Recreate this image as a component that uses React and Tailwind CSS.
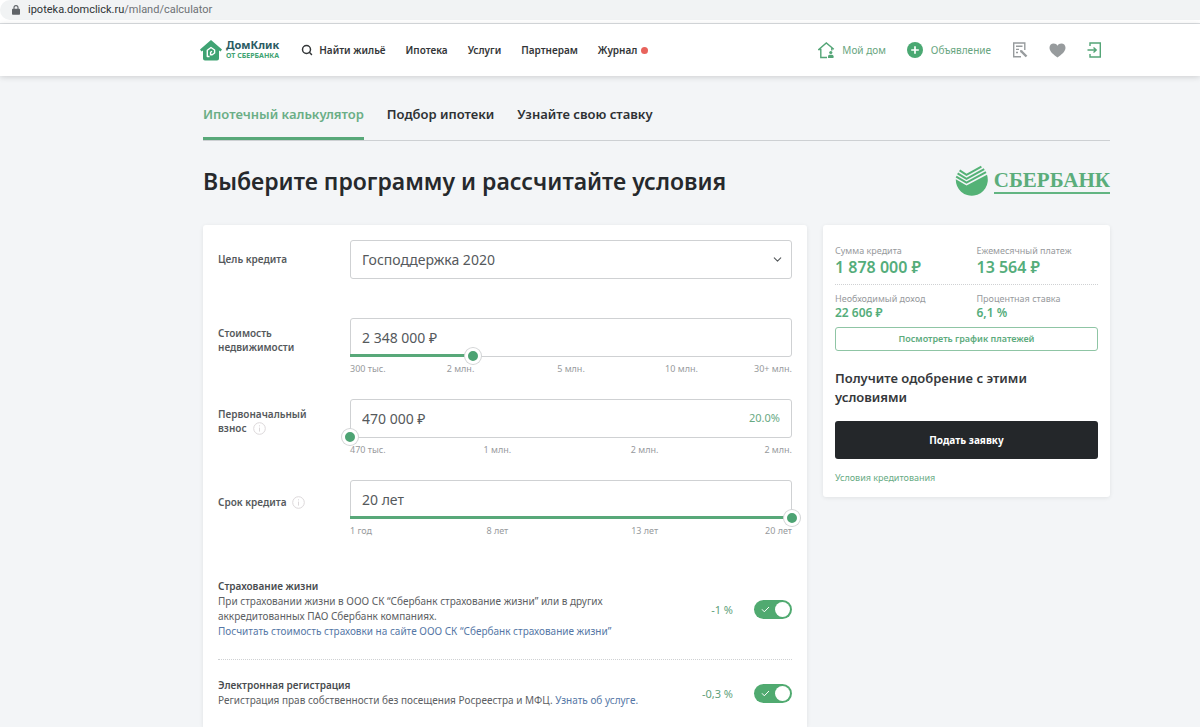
import React, { useState } from 'react';
import { Search, ChevronDown } from 'lucide-react';

const NAV = ['Ипотека', 'Услуги', 'Партнерам'];
const TABS = ['Ипотечный калькулятор', 'Подбор ипотеки', 'Узнайте свою ставку'];

function HouseLogo() {
  return (
    <svg width="22" height="21" viewBox="0 0 22 21" aria-hidden="true">
      <path d="M11 0 L22 9.5 L20.5 11.5 L19 10.6 V18.5 Q19 20.5 17 20.5 H5 Q3 20.5 3 18.5 V10.6 L1.5 11.5 L0 9.5 Z" fill="#3fa373" />
      <path d="M9.5 16.5 H7.3 V10.3 L11 7.5 L14.6 10 V13 L12.2 14.8 H10.6 V12.2 L12 11.2" fill="none" stroke="#fff" strokeWidth="1.4" strokeLinejoin="round" />
    </svg>
  );
}

function SberLogo() {
  return (
    <div className="flex items-center gap-1.5" role="img" aria-label="Сбербанк">
      <svg width="33" height="34" viewBox="0 0 33 34">
        <path d="M0.8 15.2 L11.5 21.5 L32 10.8 A16 16 0 1 1 0.8 15.2 Z" fill="#54b276" />
        <path d="M1.2 12.6 L11.5 18.7 L31 8.2 M2.6 9.4 L11.5 14.8 L29.2 5.2 M4.6 6.4 L11.5 10.8 L26.4 2.6" fill="none" stroke="#54b276" strokeWidth="2" />
      </svg>
      <span className="border-b-2 border-[#62b582] font-['Liberation_Serif',serif] text-[21px] leading-6 font-bold text-[#5bad7b]">СБЕРБАНК</span>
    </div>
  );
}

function Header() {
  return (
    <header className="flex h-[52px] items-center justify-between bg-white pr-[98px] pl-[200px] shadow-[0_1px_6px_rgba(0,0,0,0.16)]">
      <nav className="flex items-center gap-5 text-[10px] font-semibold text-[#333638]">
        <a href="#home" className="mr-0.5 flex items-center gap-1">
          <HouseLogo />
          <span className="flex flex-col">
            <span className="text-[11px] leading-3 font-bold text-[#2b5b63]">ДомКлик</span>
            <span className="text-[7px] leading-[10px] font-bold text-[#3fa373]">ОТ СБЕРБАНКА</span>
          </span>
        </a>
        <a href="#search" className="flex items-center gap-1.5">
          <Search size={12} strokeWidth={3} />
          Найти жильё
        </a>
        {NAV.map(item => (
          <a key={item} href="#nav">{item}</a>
        ))}
        <a href="#journal" className="flex items-center gap-1">
          Журнал
          <span className="size-[7px] rounded-full bg-[#e8635c]" />
        </a>
      </nav>

      <div className="flex items-center gap-[21px] text-[10px] text-[#68a580]">
        <a href="#my" className="flex items-center gap-[7px]">
          <svg width="17" height="17" viewBox="0 0 17 17" fill="none" stroke="#54a577" strokeWidth="1.4">
            <path d="M9 15.5 H2.8 V7.5 H0.8 L8.3 1 L15.8 7.2 M13.8 6 V8.5" />
            <circle cx="12.8" cy="10.5" r="1.6" fill="#54a577" stroke="none" />
            <path d="M10 16 V14.3 Q10 12.8 11.5 12.8 H14 Q15.5 12.8 15.5 14.3 V16 Z" fill="#54a577" stroke="none" />
          </svg>
          Мой дом
        </a>
        <a href="#ad" className="flex items-center gap-2">
          <svg width="16" height="16" viewBox="0 0 16 16">
            <circle cx="8" cy="8" r="8" fill="#4aa872" />
            <path d="M8 4.2 V11.8 M4.2 8 H11.8" stroke="#fff" strokeWidth="1.7" />
          </svg>
          Объявление
        </a>
        <button type="button" aria-label="Заявки">
          <svg width="16" height="16" viewBox="0 0 16 16" fill="none" stroke="#979b9d" strokeWidth="1.4">
            <path d="M12.8 8 V1 H1.7 V14.7 H9" />
            <path d="M4 4.3 H10.5 M4 7.4 H7 M4 10.5 H6" />
            <path d="M9 9 L14.5 14.5" strokeWidth="2.4" />
            <path d="M8 8 L10.5 8.5 L8.5 10.5 Z" fill="#979b9d" stroke="none" />
          </svg>
        </button>
        <button type="button" aria-label="Избранное">
          <svg width="17" height="15" viewBox="0 0 17 15">
            <path d="M8.5 14.5 C5 12 0.5 8.8 0.5 4.8 C0.5 2 2.4 0.5 4.6 0.5 C6.4 0.5 7.8 1.4 8.5 2.8 C9.2 1.4 10.6 0.5 12.4 0.5 C14.6 0.5 16.5 2 16.5 4.8 C16.5 8.8 12 12 8.5 14.5 Z" fill="#979b9d" />
          </svg>
        </button>
        <button type="button" aria-label="Войти">
          <svg width="15" height="16" viewBox="0 0 15 16" fill="none" stroke="#54a577" strokeWidth="1.4">
            <path d="M3 4 V1 H13.3 V15 H3 V12" />
            <path d="M0.5 8 H9 M6.5 5.5 L9.2 8 L6.5 10.5" />
          </svg>
        </button>
      </div>
    </header>
  );
}

function InfoIcon() {
  return (
    <svg width="13" height="13" viewBox="0 0 13 13" fill="none" stroke="#dcd8da" className="ml-1.5 inline-block">
      <circle cx="6.5" cy="6.5" r="5.8" />
      <path d="M6.5 5.6 V9.6 M6.5 3.3 V4.4" />
    </svg>
  );
}

function SliderField({ id, label, info, value, percent, ticks, hint }) {
  const [text, setText] = useState(value);
  const [pos, setPos] = useState(percent);

  return (
    <div className="flex">
      <label htmlFor={id} className="flex h-11 w-[132px] shrink-0 items-center pr-6 text-[10px] leading-[14px] font-semibold text-[#55595c]">
        <span>{label}{info && <InfoIcon />}</span>
      </label>
      <div className="min-w-0 flex-1">
        <div className="relative">
          <div className="flex h-[39px] items-center rounded-[3px] border border-[#cfd1d3] px-[11px]">
            <input
              id={id}
              value={text}
              onChange={e => setText(e.target.value)}
              className="min-w-0 flex-1 bg-transparent text-sm text-[#55595c] outline-none"
            />
            {hint && <span className="text-[11px] text-[#68a983]">{hint}</span>}
          </div>
          <div className="absolute bottom-0 left-0 h-[3px] bg-[#58a879]" style={{ width: `${pos}%` }} />
          <input
            type="range"
            aria-label={label}
            min="0"
            max="100"
            step="any"
            value={pos}
            onChange={e => setPos(Number(e.target.value))}
            className="absolute -right-2 -bottom-2 -left-2 h-[18px] w-[calc(100%+16px)] appearance-none bg-transparent [&::-webkit-slider-thumb]:size-4 [&::-webkit-slider-thumb]:appearance-none [&::-webkit-slider-thumb]:rounded-full [&::-webkit-slider-thumb]:border-[3px] [&::-webkit-slider-thumb]:border-white [&::-webkit-slider-thumb]:bg-[#4da373] [&::-webkit-slider-thumb]:shadow-[0_0_0_1px_#d3d5d6]"
          />
        </div>
        <div className="flex h-6 items-center text-[9px] text-[#979a9d]">
          {ticks.map((tick, i) => (
            <span key={i} className="flex-2 text-center first:flex-1 first:text-left last:flex-1 last:text-right">{tick}</span>
          ))}
        </div>
      </div>
    </div>
  );
}

function OptionRow({ id, title, rate, children }) {
  const [on, setOn] = useState(true);

  return (
    <div className="flex items-center text-[10px] leading-[15px] text-[#5c6063]">
      <div className="min-w-0 flex-1">
        <label htmlFor={id} className="block font-semibold text-[#484c4f]">{title}</label>
        {children}
      </div>
      <span className="mr-[21px] shrink-0 text-[11px] text-[#5f9f7b]">{rate}</span>
      <span className="relative flex">
        <input
          id={id}
          type="checkbox"
          checked={on}
          onChange={e => setOn(e.target.checked)}
          className="peer h-[19px] w-[38px] appearance-none rounded-full bg-gray-300 checked:bg-[#50aa70]"
        />
        <svg width="9" height="7" viewBox="0 0 9 7" fill="none" stroke="#fff" className="pointer-events-none absolute top-1.5 left-[7px]">
          <path d="M1 3.3 L3.3 5.8 L8 1" />
        </svg>
        <span className="pointer-events-none absolute top-0.5 left-0.5 size-[15px] rounded-full bg-white peer-checked:left-[21px]" />
      </span>
    </div>
  );
}

function Stat({ label, value, big }) {
  return (
    <div>
      <div className="text-[9px] leading-3 text-[#979a9d]">{label}</div>
      <div className={big ? 'text-base leading-5 font-semibold text-[#55ad7b]' : 'text-xs leading-4 font-semibold text-[#55ad7b]'}>{value}</div>
    </div>
  );
}

function Calculator() {
  return (
    <section className="min-w-0 flex-1 rounded-t-[3px] bg-white px-[15px] pt-[15px] pb-4 shadow-[0_1px_4px_rgba(0,0,0,0.08)]">
      <div className="flex items-center">
        <label htmlFor="goal" className="w-[132px] shrink-0 text-[10px] font-semibold text-[#55595c]">Цель кредита</label>
        <div className="relative min-w-0 flex-1">
          <select id="goal" className="block h-[39px] w-full appearance-none rounded-[3px] border border-[#cfd1d3] bg-white px-[11px] text-sm text-[#55595c]">
            <option>Господдержка 2020</option>
          </select>
          <ChevronDown size={13} className="pointer-events-none absolute top-[13px] right-2 text-[#55595c]" />
        </div>
      </div>

      <div className="mt-[39px] flex flex-col gap-[18px]">
        <SliderField id="price" label="Стоимость недвижимости" value="2 348 000 ₽" percent={27.8}
          ticks={['300 тыс.', '2 млн.', '5 млн.', '10 млн.', '30+ млн.']} />
        <SliderField id="deposit" label="Первоначальный взнос" info value="470 000 ₽" percent={0} hint="20.0%"
          ticks={['470 тыс.', '1 млн.', '2 млн.', '2 млн.']} />
        <SliderField id="term" label="Срок кредита" info value="20 лет" percent={100}
          ticks={['1 год', '8 лет', '13 лет', '20 лет']} />
      </div>

      <div className="mt-9 border-b border-dotted border-[#cfd1d3] pb-5">
        <OptionRow id="life" title="Страхование жизни" rate="-1 %">
          <p className="max-w-[420px]">При страховании жизни в ООО СК “Сбербанк страхование жизни” или в других аккредитованных ПАО Сбербанк компаниях.</p>
          <a href="#insurance" className="text-[#5577a6]">Посчитать стоимость страховки на сайте ООО СК “Сбербанк страхование жизни”</a>
        </OptionRow>
      </div>
      <div className="pt-[18px]">
        <OptionRow id="registration" title="Электронная регистрация" rate="-0,3 %">
          <p>
            Регистрация прав собственности без посещения Росреестра и МФЦ. <a href="#service" className="text-[#5577a6]">Узнать об услуге.</a>
          </p>
        </OptionRow>
      </div>
    </section>
  );
}

function Summary() {
  return (
    <aside className="w-[287px] shrink-0 self-start rounded-[3px] bg-white px-3 pt-5 pb-3 shadow-[0_1px_4px_rgba(0,0,0,0.08)]">
      <div className="grid grid-cols-2 gap-x-5 border-b border-dotted border-[#cfd1d3] pb-[7px]">
        <Stat label="Сумма кредита" value="1 878 000 ₽" big />
        <Stat label="Ежемесячный платеж" value="13 564 ₽" big />
      </div>
      <div className="mt-2 grid grid-cols-2 gap-x-5">
        <Stat label="Необходимый доход" value="22 606 ₽" />
        <Stat label="Процентная ставка" value="6,1 %" />
      </div>
      <button type="button" className="mt-1.5 block h-6 w-full rounded-[3px] border border-[#8fc5a5] text-[9px] font-semibold text-[#5dab7d]">
        Посмотреть график платежей
      </button>
      <h2 className="mt-[18px] text-[13px] leading-[19px] font-semibold text-[#35383b]">Получите одобрение с этими<br />условиями</h2>
      <button type="button" className="mt-3.5 block h-[38px] w-full rounded-[3px] bg-[#24272a] text-[10px] font-bold text-white">
        Подать заявку
      </button>
      <a href="#terms" className="mt-3 block text-[9px] leading-[14px] text-[#68ab84]">Условия кредитования</a>
    </aside>
  );
}

export default function App() {
  const [tab, setTab] = useState(TABS[0]);

  return (
    <div className="flex min-h-screen flex-col bg-[#f3f5f7] font-['Noto_Sans',sans-serif]">
      {/* Address bar */}
      <div className="border-b border-[#dcdfe2] bg-white pb-[3px]">
        <div className="flex h-5 items-center gap-2 rounded-l-full bg-[#f1f3f4] pl-3 text-[11px] text-[#6d7175]">
          <svg width="8" height="10" viewBox="0 0 8 10">
            <rect y="3.8" width="8" height="6" rx="0.8" fill="#5f6367" />
            <path d="M2 4 V2.6 A2 2 0 0 1 6 2.6 V4" fill="none" stroke="#5f6367" strokeWidth="1.1" />
          </svg>
          <span className="font-['Roboto',sans-serif]"><span className="text-[#2f3336]">ipoteka.domclick.ru</span>/mland/calculator</span>
        </div>
      </div>

      <Header />

      <main className="flex flex-1 flex-col pr-[90px] pl-[203px]">
        <div className="mt-6 flex gap-[23px] border-b border-[#cdd0d3]" role="tablist">
          {TABS.map(item => (
            <button
              key={item}
              type="button"
              role="tab"
              aria-selected={tab === item}
              onClick={() => setTab(item)}
              className={`h-10 border-b-[3px] pb-2 text-[13px] font-semibold ${tab === item ? 'border-[#58a879] text-[#6aae86]' : 'border-transparent text-[#2e3134]'}`}
            >
              {item}
            </button>
          ))}
        </div>

        <div className="flex h-[84px] items-center justify-between pb-1">
          <h1 className="text-[23px] font-semibold text-[#26292c]">Выберите программу и рассчитайте условия</h1>
          <SberLogo />
        </div>

        <div className="flex flex-1 gap-4">
          <Calculator />
          <Summary />
        </div>
      </main>
    </div>
  );
}
